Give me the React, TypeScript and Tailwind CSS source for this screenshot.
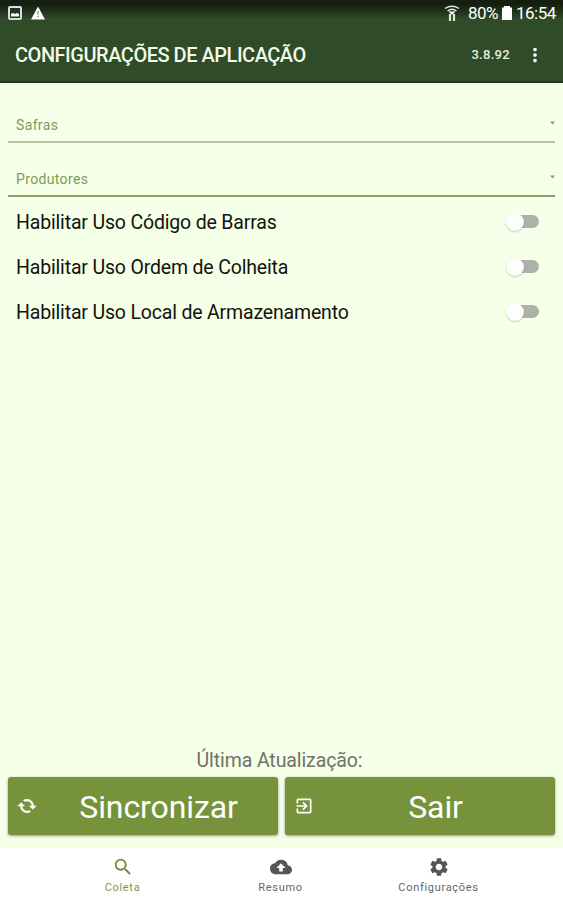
import type { ReactNode } from 'react';
import { MdBackup, MdExitToApp, MdMoreVert, MdSearch, MdSettings } from 'react-icons/md';

const options = [
  'Habilitar Uso Código de Barras',
  'Habilitar Uso Ordem de Colheita',
  'Habilitar Uso Local de Armazenamento',
];

function StatusBar() {
  return (
    <div className="flex h-[26px] items-center justify-between bg-linear-to-b from-[#141f10] from-15% to-[#2f4b27] to-75% pl-2 pr-[7px] text-white">
      <div className="flex items-center gap-[9px]">
        <svg width="14" height="14" viewBox="0 0 14 14">
          <rect x="1" y="1" width="12" height="12" rx="1" fill="#27331f" stroke="#ddd" strokeWidth="2" />
          <path d="M3 10.500V8l2-1 2 1 2-1 2 1v2.500z" fill="#fff" />
        </svg>
        <svg width="14" height="14" viewBox="0 0 14 14">
          <path d="M7 0.500L14 13.500H0z" fill="#fff" />
          <path d="M6.500 5h1l-.2 4h-.6zM6.500 10h1v1h-1z" fill="#3b4a35" />
        </svg>
      </div>
      <div className="flex items-center">
        <svg width="16" height="18" viewBox="0 0 16 18" fill="none" stroke="#dfe5dc" strokeWidth="1.300" className="mr-[8px]">
          <path d="M1 4.500q7-4.500 14 0M3.500 7q4.500-3.500 9 0" />
          <path d="M4.500 7.500h7L8 11z" fill="#fff" stroke="none" />
          <path d="M6 10v7M10 10v7" strokeWidth="2.200" />
        </svg>
        <span className="w-[31px] whitespace-nowrap text-[17px] leading-none tracking-[-0.6px]">80%</span>
        <svg width="10" height="14" viewBox="0 0 10 14" className="ml-[3px] mr-[4px]">
          <path d="M2 0h6v1.500h2V14H0V1.500h2z" fill="#fff" />
        </svg>
        <span className="w-[40px] whitespace-nowrap text-[17px] leading-none tracking-[-0.5px]">16:54</span>
      </div>
    </div>
  );
}

function SyncIcon() {
  return (
    <svg width="20" height="20" viewBox="0 0 24 24" fill="currentColor" stroke="currentColor" strokeWidth="0.700" className="-scale-x-100">
      <path d="M19 8l-4 4h3c0 3.310-2.690 6-6 6-1.010 0-1.970-.25-2.800-.7l-1.460 1.460C8.970 19.540 10.430 20 12 20c4.420 0 8-3.580 8-8h3l-4-4zM6 12c0-3.310 2.690-6 6-6 1.010 0 1.970.25 2.800.7l1.460-1.460C15.030 4.460 13.570 4 12 4c-4.420 0-8 3.580-8 8H1l4 4 4-4H6z" />
    </svg>
  );
}

function SelectField({ label, className }: { label: string; className: string }) {
  return (
    <div className={`mx-2 flex justify-between border-b-2 pl-2 text-[14px] leading-[17px] text-[#819b58] ${className}`}>
      <span className="tracking-[0.35px]">{label}</span>
      <svg width="5" height="4" viewBox="0 0 5 4" className="mt-[4px]">
        <path d="M0 0.500h5L2.500 3.500z" fill="#8b9678" />
      </svg>
    </div>
  );
}

function Toggle() {
  return (
    <div className="flex w-[33px] items-center">
      <div className="z-10 h-[18px] w-[18px] shrink-0 rounded-full bg-[#fdfdfd] shadow-[0_1px_2px_rgba(0,0,0,0.2)]" />
      <div className="-ml-[10px] h-[13px] w-[25px] shrink-0 rounded-full bg-[#adb1a9]" />
    </div>
  );
}

function ActionButton({ icon, label }: { icon: ReactNode; label: string }) {
  return (
    <button className="flex h-[58px] flex-1 items-center rounded-[3px] bg-[#76933c] pl-[9px] text-white shadow-[0_1px_3px_rgba(0,0,0,0.4)]">
      {icon}
      <span className="flex-1 pl-[2px] pt-[2px] text-center text-[32px] leading-none tracking-[-0.1px]">{label}</span>
    </button>
  );
}

function NavItem({ icon, label, active }: { icon: ReactNode; label: string; active?: boolean }) {
  return (
    <div className={`flex w-[158px] flex-col items-center text-[11px] leading-[14px] ${active ? 'text-[#6f8e32]' : 'text-[#555555]'}`}>
      {icon}
      <span className="mt-[3px] tracking-[0.7px] opacity-90">{label}</span>
    </div>
  );
}

export default function App() {
  return (
    <div className="flex h-[900px] w-[563px] flex-col overflow-hidden bg-[#f6ffe8] font-['Roboto',sans-serif]">
      <header className="h-[83px] border-b-2 border-[#1c3516] bg-[#2f4b27] text-white">
        <StatusBar />
        <div className="flex h-[57px] items-center pl-[15px] pr-[17px]">
          <h1 className="flex-1 whitespace-nowrap text-[20px] font-medium tracking-[-0.48px] text-[#f2fae8]">CONFIGURAÇÕES DE APLICAÇÃO</h1>
          <span className="mr-[14px] text-[13px] font-medium tracking-[0.3px] text-[#e8f0df]">3.8.92</span>
          <MdMoreVert size={22} />
        </div>
      </header>

      <main className="flex flex-1 flex-col">
        <SelectField label="Safras" className="mt-[34px] h-[26px] border-[#b5c1a0]" />
        <SelectField label="Produtores" className="mt-[28px] h-[26px] border-[#8b9e66]" />

        <div className="mt-[2px]">
          {options.map((option) => (
            <div key={option} className="flex h-[45px] items-center justify-between pl-4 pr-[24px]">
              <span className="pt-[3px] text-[19.500px] tracking-[-0.17px] text-[#10140c]">{option}</span>
              <Toggle />
            </div>
          ))}
        </div>

        <div className="mt-auto pb-[13px]">
          <p className="mb-[4px] pr-[4px] text-center text-[19.500px] leading-[24px] tracking-[-0.1px] text-[#6e7368]">Última Atualização:</p>
          <div className="flex gap-[7px] px-2">
            <ActionButton icon={<SyncIcon />} label="Sincronizar" />
            <ActionButton icon={<MdExitToApp size={20} />} label="Sair" />
          </div>
        </div>
      </main>

      <nav className="flex h-[52px] justify-center bg-white pr-[2px] pt-[8px]">
        <NavItem icon={<MdSearch size={22} />} label="Coleta" active />
        <NavItem icon={<MdBackup size={22} />} label="Resumo" />
        <NavItem icon={<MdSettings size={22} />} label="Configurações" />
      </nav>
    </div>
  );
}
